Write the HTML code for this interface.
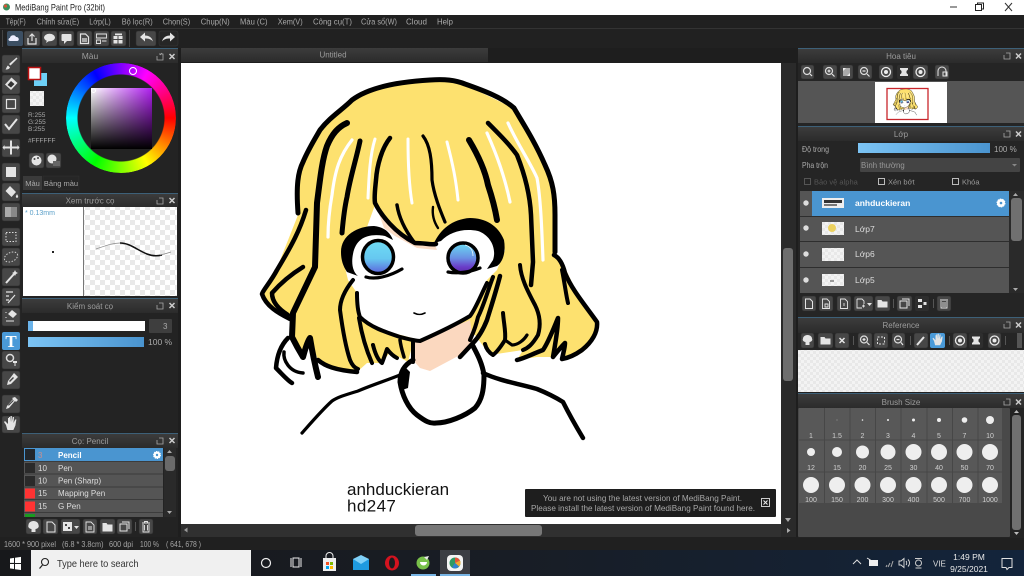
<!DOCTYPE html>
<html><head><meta charset="utf-8"><title>MediBang Paint Pro</title>
<style>
html,body{margin:0;padding:0;width:1024px;height:576px;overflow:hidden;background:#1f1f1f}
#root{position:relative;width:1024px;height:576px;overflow:hidden;filter:blur(.35px)}
svg{position:absolute;left:0;top:0}
text{font-family:"Liberation Sans","Noto Sans CJK SC",sans-serif;font-size:8.5px;fill:#b5b5b5}
.m text{font-size:8.6px;fill:#a8a8a8}
.st text{font-size:8.4px;fill:#a5a5a5}
.h{fill:#2f2f2f}.ln{fill:#3d6078}
.b{fill:#474747;stroke:#2c2c2c;stroke-width:.5}
.i{fill:#e4e4e4}.s{fill:none;stroke:#e4e4e4;stroke-width:1.2}
.t{text-anchor:middle;fill:#9c9c9c}
.k{fill:none;stroke:#000;stroke-linecap:round;stroke-linejoin:round}
.w{fill:none;stroke:#fff;stroke-linecap:round;stroke-linejoin:round}
.n{fill:#ddd;font-size:8px}
.c{text-anchor:middle;fill:#d0d0d0;font-size:7px}
.d{fill:#eee}
#wheel{position:absolute;left:66px;top:63px;width:110px;height:110px;border-radius:50%;background:conic-gradient(from 90deg,#f00,#ff0,#0f0,#0ff,#00f,#f0f,#f00);-webkit-mask:radial-gradient(circle,transparent 43px,#000 44px);mask:radial-gradient(circle,transparent 43px,#000 44px)}
#sq{position:absolute;left:91px;top:88px;width:61px;height:61px;background:linear-gradient(to bottom,rgba(0,0,0,0),#000),linear-gradient(to right,#fff,#b020f0)}
#mk{position:absolute;left:129px;top:67px;width:6px;height:6px;border:1.5px solid #fff;border-radius:50%}
#mk2{position:absolute;left:91px;top:88px;width:3px;height:3px;border:1px solid #fff;border-radius:50%}
</style></head><body><div id="root">
<svg width="1024" height="576" viewBox="0 0 1024 576" xmlns="http://www.w3.org/2000/svg">
<defs>
<pattern id="chk" width="10" height="10" patternUnits="userSpaceOnUse"><rect width="10" height="10" fill="#fff"/><rect width="5" height="5" fill="#e9e9e9"/><rect x="5" y="5" width="5" height="5" fill="#e9e9e9"/></pattern>
<pattern id="chk2" width="6" height="6" patternUnits="userSpaceOnUse"><rect width="6" height="6" fill="#f3f3f3"/><rect width="3" height="3" fill="#e8e8e8"/><rect x="3" y="3" width="3" height="3" fill="#e8e8e8"/></pattern>
<linearGradient id="bl" x1="0" x2="1" y1="0" y2="0"><stop offset="0" stop-color="#7cc4f4"/><stop offset="1" stop-color="#4a94cf"/></linearGradient>
<linearGradient id="tb" x1="0" x2="1" y1="0" y2="0"><stop offset="0" stop-color="#17181b"/><stop offset=".5" stop-color="#181d25"/><stop offset="1" stop-color="#13243b"/></linearGradient>
<linearGradient id="ey1" x1="0" x2="0" y1="0" y2="1"><stop offset="0" stop-color="#6fdcf5"/><stop offset=".55" stop-color="#66c8f0"/><stop offset="1" stop-color="#5c62dc"/></linearGradient>
<linearGradient id="ey2" x1="0" x2="0" y1="0" y2="1"><stop offset="0" stop-color="#6adcf2"/><stop offset=".5" stop-color="#6a90e4"/><stop offset=".8" stop-color="#6a3cc8"/><stop offset="1" stop-color="#5a2aa8"/></linearGradient>
<linearGradient id="hd" x1="0" x2="0" y1="0" y2="1"><stop offset="0" stop-color="#3c3c3c"/><stop offset="1" stop-color="#2b2b2b"/></linearGradient>
</defs>

<!-- base -->
<rect width="1024" height="576" fill="#212121"/>
<rect width="1024" height="15" fill="#fff"/>
<circle cx="6.5" cy="7" r="3.5" fill="#3a8f5c"/><circle cx="5.5" cy="6" r="1.6" fill="#d8553a"/>
<text x="15" y="10.5" textLength="90" lengthAdjust="spacingAndGlyphs" style="font-size:9.5px;fill:#222">MediBang Paint Pro (32bit)</text>
<rect x="950" y="6.5" width="7" height="1" fill="#333"/>
<rect x="975.5" y="4.5" width="6" height="6" fill="none" stroke="#222"/><path d="M977.5 5V3H983.5V9H981.5" fill="none" stroke="#222"/>
<path d="M1005 3l7 8m0-8l-7 8" stroke="#333" fill="none"/>

<!-- menu -->
<rect y="15" width="1024" height="13" fill="#202020"/>
<rect y="28" width="1024" height="1" fill="#333"/>
<g class="m">
<text x="5.7" y="24.5" textLength="20" lengthAdjust="spacingAndGlyphs">Tệp(F)</text>
<text x="36.7" y="24.5" textLength="42.5" lengthAdjust="spacingAndGlyphs">Chỉnh sửa(E)</text>
<text x="89.3" y="24.5" textLength="21.5" lengthAdjust="spacingAndGlyphs">Lớp(L)</text>
<text x="121.7" y="24.5" textLength="31" lengthAdjust="spacingAndGlyphs">Bộ lọc(R)</text>
<text x="162.7" y="24.5" textLength="27.5" lengthAdjust="spacingAndGlyphs">Chọn(S)</text>
<text x="200.7" y="24.5" textLength="29" lengthAdjust="spacingAndGlyphs">Chụp(N)</text>
<text x="240" y="24.5" textLength="27.5" lengthAdjust="spacingAndGlyphs">Màu (C)</text>
<text x="277.7" y="24.5" textLength="25" lengthAdjust="spacingAndGlyphs">Xem(V)</text>
<text x="313" y="24.5" textLength="39" lengthAdjust="spacingAndGlyphs">Công cụ(T)</text>
<text x="361" y="24.5" textLength="36" lengthAdjust="spacingAndGlyphs">Cửa sổ(W)</text>
<text x="406" y="24.5" textLength="21" lengthAdjust="spacingAndGlyphs">Cloud</text>
<text x="437" y="24.5" textLength="16" lengthAdjust="spacingAndGlyphs">Help</text>
</g>

<!-- toolbar -->
<rect y="29" width="1024" height="19" fill="#212121"/>
<rect x="2" y="30" width="1" height="17" fill="#444"/>
<rect x="129" y="30" width="1" height="17" fill="#444"/>
<rect x="7" y="31" width="16" height="15" rx="2" fill="#3c4f63"/>
<path d="M10 41c-2 0-2-3 0-3 0-3 5-4 6-1 3-.5 4 4 1 4z" fill="#eef"/>
<rect class="b" x="24" y="31" width="16" height="15" rx="2"/><path class="s" d="M32 41v-7m-2.5 2.5l2.5-2.5 2.5 2.5M28 38v6h8v-6"/>
<rect class="b" x="42" y="31" width="15" height="15" rx="2"/><ellipse class="i" cx="49.5" cy="37.5" rx="5.5" ry="3.8"/><path class="i" d="M47 40l-1 3 3-2z"/>
<rect class="b" x="59" y="31" width="15" height="15" rx="2"/><rect class="i" x="61.5" y="34" width="10" height="7" rx="1"/><path class="i" d="M64 41v3l3-3z"/>
<rect class="b" x="77" y="31" width="15" height="15" rx="2"/><path class="s" d="M80.5 34h5l3 3v6.5h-8zM82 39h5M82 41h5"/>
<rect class="b" x="94" y="31" width="15" height="15" rx="2"/><path class="s" d="M96.5 34h10v4h-10zM96.5 40h4v3.5h-4zM102 41h4.5" style="stroke-width:.9"/>
<rect class="b" x="111" y="31" width="15" height="15" rx="2"/><path class="i" d="M113.5 36h4v3h-4zM118.5 36h4v3h-4zM113.5 40h4v3.5h-4zM118.5 40h4v3.5h-4zM115 33.5h7v1.8h-7z"/>
<rect class="b" x="136" y="31" width="20" height="15" rx="2"/><path class="i" d="M140 37l5-4.500v3c4 0 7 2 8 6-2-2.500-4.500-3-8-3v3z"/>
<rect x="159" y="31" width="19" height="15" rx="2" fill="#262626" stroke="#3a3a3a" stroke-width=".5"/><path class="i" d="M175 37l-5-4.500v3c-4 0-7 2-8 6 2-2.500 4.500-3 8-3v3z"/>

<!-- left tool column -->
<rect x="0" y="48" width="22" height="490" fill="#232323"/>
<g>
<rect class="b" x="2" y="55" width="18" height="18" rx="2"/><path class="i" d="M16.5 57.5l1 1-7 7-1.5-1.5zM8 65.5l2 2c-1 2-3 2-4.5 2 1-1 1-3 2.5-4z"/>
<rect class="b" x="2" y="75" width="18" height="19" rx="2"/><path class="i" d="M11.5 77.5l6 5.5-6.5 7-6-5.5z"/><path d="M7.5 85l3.5-4 3.500 3-3.500 3.500z" fill="#333"/>
<rect class="b" x="2" y="95" width="18" height="18" rx="2"/><rect class="s" x="6.5" y="99.5" width="9" height="9"/>
<rect class="b" x="2" y="115" width="18" height="19" rx="2"/><path class="s" d="M5 124l4 5 8-10" style="stroke-width:2"/>
<rect class="b" x="2" y="139" width="18" height="18" rx="2"/><path class="i" d="M10 141h2v6h5.5v-1.5l2 2.5-2 2.5v-1.5H12v6h-2v-6H4.5v1.5l-2-2.5 2-2.5v1.500H10z" transform="translate(0,-.5)"/>
<rect class="b" x="2" y="163" width="18" height="18" rx="2"/><rect class="i" x="6" y="167" width="10" height="10"/>
<rect class="b" x="2" y="183" width="18" height="18" rx="2"/><path class="i" d="M10 186l6 6-4.500 5-6-6zM17 194c1 2 2 3 0 4-2-1-1-2 0-4z"/>
<rect class="b" x="2" y="203" width="18" height="18" rx="2"/><rect x="5" y="207" width="12" height="10" fill="#888"/><rect x="5" y="207" width="6" height="10" fill="#aaa"/>
<rect class="b" x="2" y="228" width="18" height="18" rx="2"/><rect x="6" y="232.5" width="10" height="9" fill="none" stroke="#ddd" stroke-dasharray="1.5 1.5"/>
<rect class="b" x="2" y="248" width="18" height="18" rx="2"/><ellipse cx="11" cy="257" rx="7" ry="4.5" fill="none" stroke="#ccc" stroke-dasharray="1.5 1.5" transform="rotate(-25 11 257)"/>
<rect class="b" x="2" y="268" width="18" height="18" rx="2"/><path class="s" d="M6 283l8-9" style="stroke-width:2"/><path class="i" d="M15 270l1 2 2 1-2 1-1 2-1-2-2-1 2-1z"/>
<rect class="b" x="2" y="288" width="18" height="18" rx="2"/><path class="s" d="M6 292h7M6 296h3M6 300h3M8 303l7-8" style="stroke-width:1.2"/>
<rect class="b" x="2" y="308" width="18" height="18" rx="2"/><path class="i" d="M12 310l5 4-4 4-5-4z"/><path class="s" d="M6 312v1M6 317v1M6 321h8" style="stroke-width:1"/>
<rect x="2" y="332" width="18" height="18" rx="2" fill="#4a9ad8"/><text x="11" y="347" style="font-size:17px;font-weight:bold;fill:#fff;text-anchor:middle;font-family:'Liberation Serif',serif">T</text>
<rect class="b" x="2" y="351" width="18" height="18" rx="2"/><circle cx="10" cy="358" r="3.5" fill="none" stroke="#ddd" stroke-width="1.5"/><path class="i" d="M13 361h4v2h-1.5v3h-1v-3H13z"/>
<rect class="b" x="2" y="371" width="18" height="18" rx="2"/><path class="i" d="M14 373l4 4-7 7-4 1 1-4z"/><path d="M9 381l4-4 1 1-4 4z" fill="#444"/>
<rect class="b" x="2" y="395" width="18" height="18" rx="2"/><path class="i" d="M15 397l3 3-2 2-1-1-6 7-3 1 1-3 6-7-1-1z"/><path d="M8 405l5-5 .8.8-5 5z" fill="#444"/>
<rect class="b" x="2" y="416" width="18" height="17" rx="2"/><path class="i" d="M6 425l-2-3 1-1 3 3v-6h1v-1h1v5l.6-6h1.2v6l1-5h1.2l-.5 6 1.7-3.500h1.2l-1 6-2 4.500h-6z"/>
</g>

<!-- canvas frame -->
<rect x="178" y="48" width="620" height="490" fill="#1e1e1e"/>
<rect x="181" y="48" width="307" height="14" fill="url(#hd)"/>
<text x="333" y="57.5" class="t" style="font-size:8px">Untitled</text>
<rect x="181" y="63" width="600" height="461" fill="#fff"/>

<!-- artwork -->
<g id="art">
<path fill="#FDE16F" d="M430,80C395,81 372,88 358,96C340,108 325,122 315,140C305,160 297,175 298,195L298,215L277,268L262,293L277,313L292,320L292,337L303,357L310,338L318,360L332,368L357,372L367,363L382,363L390,352L408,362L413,342L475,335L490,355L523,350L517,360L537,357L553,357L565,343L562,358L582,353L598,328L597,320L577,293L560,257L555,253L555,220L553,183L537,147L513,108L480,92L450,80Z"/>
<path fill="#fff" d="M375,205L383,217L415,243L435,245L460,222L490,225L505,250L497,270L487,280L470,317L420,340L375,328L360,317L357,293L348,280L342,255L352,232L367,227Z"/>
<path fill="#FBD8BF" d="M414,343L420,340L470,320L473,340L460,355L430,371L420,368L413,360Z"/>
<path fill="#FBD8BF" d="M378,211L383,217L415,243L435,245L437,250L417,248L395,236L384,228Z" opacity=".9"/>
<!-- highlights -->
<g class="w">
<path stroke-width="3.2" d="M352,140C340,155 335,170 332,195C329,212 328,225 328,237"/>
<path stroke-width="3" d="M375,139C370,155 369,175 368,198"/>
<path stroke-width="3" d="M408,139C408,165 409,185 412,203"/>
<path stroke-width="3" d="M447,142C453,165 456,180 458,200"/>
<path stroke-width="3.2" d="M487,133C497,155 505,178 510,202"/>
<path stroke-width="3.2" d="M508,123C518,145 530,162 537,178C541,200 542,235 543,260"/>
</g>
<!-- outline -->
<g class="k">
<path stroke-width="5" d="M298,213C296,185 298,172 303,162C308,150 313,142 320,130C330,117 342,110 352,100C368,88 395,82 430,80C445,79 455,80 465,84C485,91 503,98 514,108C524,125 535,142 545,165C553,182 555,195 555,215L555,252"/>
<path stroke-width="4.5" d="M306,210C300,230 292,245 277,270C270,283 263,290 262,294C266,306 278,313 290,319"/>
<path stroke-width="4.5" d="M303,267C290,275 279,285 272,293C272,303 280,310 288,315"/>
<path stroke-width="6" d="M347,123C338,127 332,134 327,146C322,160 320,180 317,203L315,267L293,313L292,337C296,345 300,352 303,357C305,350 307,342 310,338C312,350 315,365 318,377"/>
<path stroke-width="4.5" d="M318,360C325,366 335,370 357,372"/>
<path stroke-width="5" d="M360,141C356,160 350,178 347,197C344,210 343,222 342,233"/>
<path stroke-width="4.5" d="M390,138C382,148 377,165 376,180C375,190 374,197 375,203C381,215 395,233 415,243C425,243 430,245 436,244"/>
<path stroke-width="3.5" d="M397,205C399,218 405,230 414,242"/>
<path stroke-width="3.2" d="M423,136C430,145 432,160 432,180C434,195 440,210 445,222"/>
<path stroke-width="2.4" d="M433,207C432,215 434,222 438,228"/>
<path stroke-width="6" d="M469,140C478,155 485,170 488,185C492,197 495,208 497,220"/>
<path stroke-width="4.5" d="M488,123C500,135 510,145 517,155C525,175 530,195 531,215L533,262L531,285"/>
<path stroke-width="4" d="M520,265C521,278 527,290 535,305C540,315 541,325 538,335C532,345 528,348 523,350"/>
<path stroke-width="4.5" d="M554,255C560,258 563,265 565,273C572,290 585,305 597,322C598,332 592,342 582,350C575,355 568,358 562,359C564,350 565,347 565,343C560,348 557,352 553,357C555,345 558,330 558,318C553,330 548,343 543,350C530,355 525,358 517,360"/>
<path stroke-width="4" d="M562,270C565,285 566,295 568,303"/>
<path stroke-width="4.5" d="M500,276C495,295 490,310 487,320C483,330 478,338 473,343L460,357"/>
<path stroke-width="4" d="M493,277C488,290 484,305 478,317C475,330 472,335 470,340"/>
<path stroke-width="4" d="M503,313C504,325 506,332 505,340C500,348 497,352 493,355C488,352 486,348 485,344"/>
<path stroke-width="3.2" d="M505,340L512,345C518,345 524,340 527,335"/>
<path stroke-width="4" d="M353,280C345,290 340,300 340,310C342,325 345,345 350,360C352,365 355,368 358,369"/>
<path stroke-width="4" d="M359,318C361,330 364,345 372,363"/>
<path stroke-width="4" d="M373,345C375,353 378,360 382,363C384,358 386,352 387,349C390,353 393,356 397,358"/>
<path stroke-width="3.5" d="M400,340C401,348 403,353 404,357"/>
<path stroke-width="4" d="M357,293C357,305 358,312 360,317C370,327 385,332 400,337C408,339 415,341 420,341C438,333 455,325 470,316C475,310 480,297 487,283"/>
<path stroke-width="4" d="M413,342L413,362"/>
<!-- small strand -->
<path stroke-width="4.5" d="M288,338C281,345 277,355 276,368C283,375 287,380 292,383"/>
<path stroke-width="3.5" d="M284,352C283,360 289,372 303,373"/>
<!-- collar -->
<path stroke-width="5" d="M413,360C404,365 400,372 400,382C402,395 408,408 417,415C425,421 430,424 436,423C448,423 465,416 475,408C482,400 484,390 484,375C482,362 476,352 473,346"/>
<path stroke-width="3.2" d="M400,375C385,381 372,385 358,391C345,395 338,397 332,401C322,410 310,424 302,433"/>
<path stroke-width="4.5" d="M483,373C500,381 520,384 537,389C547,393 555,397 563,402C570,416 577,428 583,438"/>
<path fill="#000" stroke="none" d="M404,366L398,380L402,390L408,388L410,372Z"/>
<!-- mouth -->
<path stroke-width="1.6" d="M414,313C418,315 421,315 425,313"/>
</g>
<!-- eyes -->
<path d="M341,252C341,235 358,226 374,226C384,227 390,232 393,240L385,236C368,233 356,238 353,254C351,264 353,272 358,276L347,272C343,266 341,260 341,252Z" fill="#000"/>
<ellipse cx="378" cy="257" rx="15.5" ry="16.5" fill="url(#ey1)" stroke="#000" stroke-width="3.5"/>
<path d="M366,277C376,280 390,276 402,269" class="k" stroke-width="3.2"/>
<path d="M434,243C440,230 452,219 470,218C485,218 498,225 504,240C506,252 503,262 497,266L487,269L493,260C497,248 490,235 478,231C463,228 450,232 441,241Z" fill="#000"/>
<ellipse cx="463" cy="258" rx="15" ry="15" fill="url(#ey2)" stroke="#000" stroke-width="3.5"/>
<path d="M465,245C470,246 473,250 473,256" fill="none" stroke="#eaf6ff" stroke-width=".8"/>
<path d="M448,272C458,274 470,272 480,268" class="k" stroke-width="3.2"/>
</g>

<text x="347" y="495" style="font-size:17px;fill:#111">anhduckieran</text>
<text x="347" y="511.5" style="font-size:17px;fill:#111;letter-spacing:.4px">hd247</text>

<!-- notification -->
<rect x="525" y="489" width="251" height="28" rx="1" fill="#1e1e1e"/>
<text x="543" y="501" textLength="199" lengthAdjust="spacingAndGlyphs" style="font-size:8.2px;fill:#a8a8a8">You are not using the latest version of MediBang Paint.</text>
<text x="531" y="511" textLength="224" lengthAdjust="spacingAndGlyphs" style="font-size:8.2px;fill:#a8a8a8">Please install the latest version of MediBang Paint found here.</text>
<rect x="761.5" y="498.5" width="8" height="8" fill="none" stroke="#ccc"/><path d="M763.5 500.5l4 4m0-4l-4 4" stroke="#eee"/>

<!-- canvas scrollbars -->
<rect x="781" y="63" width="15" height="474" fill="#2a2a2a"/>
<rect x="783" y="248" width="10" height="133" rx="3" fill="#6e6e6e"/>
<path d="M785 518h6l-3 4z" fill="#aaa"/>
<rect x="181" y="524" width="600" height="13" fill="#303030"/>
<rect x="415" y="525" width="127" height="11" rx="3" fill="#777"/>
<path d="M184 530l3.5-2.5v5z" fill="#999"/>
<path d="M787 528l3.5 2.5-3.5 2.5z" fill="#aaa"/>

<!-- colour panel -->
<rect x="22" y="48" width="156" height="144" fill="#232323"/>
<rect x="22" y="48" width="156" height="15" fill="url(#hd)"/>
<rect x="22" y="48" width="156" height="1" class="ln"/>
<text x="90" y="59" class="t" style="font-size:8.5px">Màu</text>
<path d="M159 54h4v6h-6v-4M162 53l-2 2" fill="none" stroke="#aaa" stroke-width=".8"/>
<path d="M169.5 54l5 5m0-5l-5 5" stroke="#ccc" stroke-width="1.5"/>
<rect x="34" y="73" width="13" height="13" fill="#6dd0f7"/>
<rect x="28.5" y="67.5" width="12" height="12" fill="#fff" stroke="#b11" stroke-width="1.5"/>
<rect x="30" y="91" width="14" height="15" fill="url(#chk2)"/>
<text x="28" y="117" style="font-size:6.5px;fill:#aaa">R:255</text>
<text x="28" y="124" style="font-size:6.5px;fill:#aaa">G:255</text>
<text x="28" y="131" style="font-size:6.5px;fill:#aaa">B:255</text>
<text x="28" y="142.5" style="font-size:6.5px;fill:#aaa">#FFFFFF</text>
<rect class="b" x="29" y="153" width="15" height="15" rx="2"/><circle class="i" cx="36.5" cy="160.5" r="5"/><circle cx="34.5" cy="159" r="1" fill="#444"/><circle cx="38" cy="158" r="1" fill="#444"/>
<rect class="b" x="46" y="153" width="15" height="15" rx="2"/><circle class="i" cx="52" cy="159" r="4.5"/><rect x="53" y="161" width="7" height="5" fill="#666"/>
<rect x="23" y="176" width="19" height="14" fill="#3a3a3a"/><text x="32.5" y="186" class="t" style="font-size:7.5px;fill:#aaa">Màu</text>
<rect x="43" y="176" width="36" height="14" fill="#262626" stroke="#333" stroke-width=".5"/><text x="61" y="186" class="t" style="font-size:7.5px;fill:#aaa">Bảng màu</text>

<!-- brush preview -->
<rect x="22" y="193" width="156" height="105" fill="#232323"/>
<rect x="22" y="193" width="156" height="1" class="ln"/>
<rect x="22" y="194" width="156" height="13" fill="url(#hd)"/>
<text x="90" y="203.5" class="t" style="font-size:8px">Xem trước cọ</text>
<path d="M159 198h4v6h-6v-4" fill="none" stroke="#aaa" stroke-width=".8"/><path d="M169.5 198l5 5m0-5l-5 5" stroke="#ccc" stroke-width="1.5"/>
<rect x="23" y="207" width="60" height="89" fill="#fff"/>
<rect x="84" y="207" width="93" height="89" fill="url(#chk)"/>
<rect x="83" y="207" width="1" height="89" fill="#777"/>
<text x="25" y="215" style="font-size:7px;fill:#5a9fc8">* 0.13mm</text>
<rect x="52" y="251" width="2" height="2" fill="#222"/>
<path d="M96 249C105 246 112 243 120 243C130 243 137 250 147 254C152 256 158 256 162 255" fill="none" stroke="#888" stroke-width=".7"/>
<path d="M120 243C130 243 137 250 147 254C152 256 158 256 162 255" fill="none" stroke="#111" stroke-width="1.5"/>
<path d="M160 255C165 254 168 253 171 252" fill="none" stroke="#888" stroke-width=".7"/>

<!-- brush control -->
<rect x="22" y="298" width="156" height="134" fill="#232323"/>
<rect x="22" y="298" width="156" height="1" class="ln"/>
<rect x="22" y="299" width="156" height="14" fill="url(#hd)"/>
<text x="90" y="309" class="t" style="font-size:8px">Kiểm soát cọ</text>
<path d="M159 303h4v6h-6v-4" fill="none" stroke="#aaa" stroke-width=".8"/><path d="M169.5 303l5 5m0-5l-5 5" stroke="#ccc" stroke-width="1.5"/>
<rect x="28" y="321" width="117" height="10" fill="#fff"/><rect x="28" y="321" width="5" height="10" fill="#6ab3ea"/>
<rect x="149" y="319" width="23" height="14" rx="1" fill="#3e3e3e"/><text x="163" y="329" style="font-size:8px;fill:#aaa">3</text>
<rect x="28" y="337" width="116" height="10" fill="url(#bl)"/>
<text x="148" y="345" style="font-size:8.5px;fill:#aaa">100 %</text>

<!-- brush panel -->
<rect x="22" y="433" width="156" height="105" fill="#232323"/>
<rect x="22" y="433" width="156" height="1" class="ln"/>
<rect x="22" y="434" width="156" height="14" fill="url(#hd)"/>
<text x="90" y="444" class="t" style="font-size:8px">Cọ: Pencil</text>
<path d="M159 438h4v6h-6v-4" fill="none" stroke="#aaa" stroke-width=".8"/><path d="M169.5 438l5 5m0-5l-5 5" stroke="#ccc" stroke-width="1.5"/>
<rect x="24" y="448" width="139" height="69" fill="#555"/>
<rect x="24" y="448" width="139" height="13" fill="#4a95d0"/>
<rect x="25" y="449" width="10" height="11" fill="#22272c"/>
<text x="38" y="458" style="font-size:8px;fill:#c89090">3</text>
<text x="58" y="458" style="font-size:8px;fill:#fff;font-weight:bold">Pencil</text>
<circle cx="157" cy="455" r="3.5" fill="#fff" stroke="#fff" stroke-dasharray="1.2 1"/><circle cx="157" cy="455" r="1.2" fill="#4a95d0"/>
<rect x="24" y="461" width="139" height="1" fill="#3c3c3c"/>
<rect x="25" y="463" width="10" height="10" fill="#2a2a2a"/><text x="38" y="471" class="n">10</text><text x="58" y="471" class="n">Pen</text>
<rect x="24" y="473.5" width="139" height="1" fill="#3c3c3c"/>
<rect x="25" y="476" width="10" height="10" fill="#2a2a2a"/><text x="38" y="483.5" class="n">10</text><text x="58" y="483.5" class="n">Pen (Sharp)</text>
<rect x="24" y="486.5" width="139" height="1" fill="#3c3c3c"/>
<rect x="25" y="488.5" width="10" height="10" fill="#f33"/><text x="38" y="496" class="n">15</text><text x="58" y="496" class="n">Mapping Pen</text>
<rect x="24" y="499" width="139" height="1" fill="#3c3c3c"/>
<rect x="25" y="501.5" width="10" height="10" fill="#f33"/><text x="38" y="509" class="n">15</text><text x="58" y="509" class="n">G Pen</text>
<rect x="24" y="512" width="139" height="1" fill="#3c3c3c"/>
<rect x="25" y="514" width="10" height="3" fill="#1a9a20"/>
<rect x="164" y="448" width="12" height="69" fill="#2a2a2a"/>
<rect x="165" y="456" width="10" height="15" rx="3" fill="#6a6a6a"/>
<path d="M167 453l2.5-3 2.5 3zM167 511l2.5 3 2.5-3z" fill="#aaa"/>
<g>
<rect class="b" x="26" y="519" width="15" height="15" rx="2"/><path class="i" d="M33.5 521c3 0 5 2 5 4 1 2-1 4-3 4v3h-4v-3c-2 0-4-2-3-4 0-2 2-4 5-4z"/>
<rect class="b" x="43" y="519" width="15" height="15" rx="2"/><path class="s" d="M47 522h5l3 3v7h-8z" style="stroke-width:1"/>
<rect class="b" x="61" y="519" width="19" height="15" rx="2"/><rect class="i" x="63" y="522" width="9" height="9"/><rect x="65" y="524" width="2" height="2" fill="#444"/><rect x="68" y="527" width="2" height="2" fill="#444"/><path class="i" d="M74 526h5l-2.5 3z"/>
<rect class="b" x="83" y="519" width="14" height="15" rx="2"/><path class="s" d="M86 522h5l3 3v7h-8zM88 527h4M88 529h4" style="stroke-width:.9"/>
<rect class="b" x="100" y="519" width="15" height="15" rx="2"/><path class="i" d="M102.5 523h4l1 1.5h5v7h-10z"/>
<rect class="b" x="117" y="519" width="15" height="15" rx="2"/><rect class="s" x="120" y="524" width="7" height="7" style="stroke-width:1"/><path class="s" d="M122 522h7v7" style="stroke-width:1"/>
<rect x="135" y="522" width="1" height="9" fill="#555"/>
<rect class="b" x="139" y="519" width="14" height="15" rx="2"/><path class="s" d="M142 523h8M143 524v8h6v-8M144.5 525v5.5M147.500 525v5.5M144.5 523v-1.5h3v1.5" style="stroke-width:.9"/>
</g>

<!-- status -->
<rect y="537" width="1024" height="13" fill="#202020"/>
<g class="st">
<text x="4" y="547" textLength="52" lengthAdjust="spacingAndGlyphs">1600 * 900 pixel</text>
<text x="62" y="547" textLength="41.5" lengthAdjust="spacingAndGlyphs">(6.8 * 3.8cm)</text>
<text x="109" y="547" textLength="24" lengthAdjust="spacingAndGlyphs">600 dpi</text>
<text x="140" y="547" textLength="19" lengthAdjust="spacingAndGlyphs">100 %</text>
<text x="166" y="547" textLength="35" lengthAdjust="spacingAndGlyphs">( 641, 678 )</text>
</g>

<!-- navigator -->
<rect x="798" y="48" width="226" height="78" fill="#252525"/>
<rect x="798" y="48" width="226" height="1" class="ln"/>
<rect x="798" y="49" width="226" height="14" fill="url(#hd)"/>
<text x="901" y="59" class="t" style="font-size:8px">Hoa tiêu</text>
<path d="M1006 53h4v6h-6v-4" fill="none" stroke="#aaa" stroke-width=".8"/><path d="M1016 53.5l5 5m0-5l-5 5" stroke="#ccc" stroke-width="1.5"/>
<g>
<rect class="b" x="801" y="65" width="13" height="14" rx="2"/><circle cx="807" cy="71" r="3.5" fill="none" stroke="#ddd" stroke-width="1.2"/><path class="s" d="M810 74l2 2"/>
<rect class="b" x="823" y="65" width="14" height="14" rx="2"/><circle cx="829" cy="71" r="3.5" fill="none" stroke="#ddd" stroke-width="1.2"/><path class="s" d="M832 74l2.5 2.5M827.5 71h3M829 69.5v3"/>
<rect class="b" x="840" y="65" width="13" height="14" rx="2"/><rect x="843" y="68" width="7" height="8" fill="#aaa"/><path d="M843 68h3l-3 3zM850 76h-3l3-3z" fill="#eee"/>
<rect class="b" x="858" y="65" width="14" height="14" rx="2"/><circle cx="864" cy="71" r="3.5" fill="none" stroke="#ddd" stroke-width="1.2"/><path class="s" d="M867 74l2.5 2.5M862.5 71h3"/>
<rect class="b" x="879" y="65" width="14" height="14" rx="2"/><circle cx="886" cy="72" r="4.5" fill="none" stroke="#eee" stroke-width="1.3"/><circle cx="886" cy="72" r="2" fill="#eee"/>
<rect x="897" y="65" width="13" height="14" rx="2" fill="#2e2e2e"/><path class="i" d="M900 68h8v1.5l-1.5 1.5v2l1.5 1.5v1.5h-8v-1.5l1.5-1.5v-2l-1.5-1.5z"/>
<rect class="b" x="913" y="65" width="15" height="14" rx="2"/><circle cx="920.5" cy="72" r="4.5" fill="none" stroke="#eee" stroke-width="1.3"/><circle cx="920.5" cy="72" r="2" fill="#eee"/>
<rect class="b" x="935" y="65" width="14" height="14" rx="2"/><path class="s" d="M938 76v-5a4 4 0 0 1 8 0v5M943 72h4v4h-4z" style="stroke-width:1"/>
</g>
<rect x="798" y="81" width="226" height="42" fill="#555"/>
<rect x="875" y="82" width="72" height="41" fill="#fff"/>
<use href="#art" transform="translate(874,83) scale(.073)"/>
<rect x="887" y="88.5" width="41" height="31" fill="none" stroke="#c8252b" stroke-width="1.3"/>

<!-- layers -->
<rect x="798" y="126" width="226" height="190" fill="#252525"/>
<rect x="798" y="126" width="226" height="1" class="ln"/>
<rect x="798" y="127" width="226" height="14" fill="url(#hd)"/>
<text x="901" y="137" class="t" style="font-size:8px">Lớp</text>
<path d="M1006 131h4v6h-6v-4" fill="none" stroke="#aaa" stroke-width=".8"/><path d="M1016 131.5l5 5m0-5l-5 5" stroke="#ccc" stroke-width="1.5"/>
<text x="802" y="152" textLength="27" lengthAdjust="spacingAndGlyphs" style="font-size:8px;fill:#aaa">Độ trong</text>
<rect x="858" y="143" width="132" height="10" fill="url(#bl)"/>
<text x="994" y="152" style="font-size:8px;fill:#aaa">100 %</text>
<text x="802" y="168" textLength="26" lengthAdjust="spacingAndGlyphs" style="font-size:8px;fill:#aaa">Pha trộn</text>
<rect x="860" y="158" width="160" height="14" rx="1" fill="#444"/>
<text x="861" y="168" style="font-size:7.8px;fill:#999">Bình thường</text>
<path d="M1012 164h5l-2.5 2.5z" fill="#888"/>
<rect x="804.5" y="178.5" width="6" height="6" fill="none" stroke="#555"/>
<text x="814" y="184.5" style="font-size:7.5px;fill:#555">Bảo vệ alpha</text>
<rect x="878.5" y="178.5" width="6" height="6" fill="none" stroke="#bbb"/>
<text x="888" y="184.5" style="font-size:7.5px;fill:#999">Xén bớt</text>
<rect x="952.5" y="178.5" width="6" height="6" fill="none" stroke="#bbb"/>
<text x="962" y="184.5" style="font-size:7.5px;fill:#999">Khóa</text>

<rect x="800" y="191" width="209" height="102" fill="#555"/>
<rect x="812" y="191" width="197" height="25" fill="#4a95d0"/>
<rect x="800" y="241" width="209" height="1" fill="#2e2e2e"/><rect x="800" y="267" width="209" height="1" fill="#2e2e2e"/><rect x="800" y="216" width="209" height="1" fill="#2e2e2e"/>
<circle cx="806" cy="203" r="2.7" fill="#ddd"/><circle cx="806" cy="228" r="2.7" fill="#ddd"/><circle cx="806" cy="254" r="2.7" fill="#ddd"/><circle cx="806" cy="280" r="2.7" fill="#ddd"/>
<rect x="822" y="198" width="22" height="10" fill="#eee"/><rect x="824" y="200" width="18" height="3" fill="#333"/><rect x="824" y="204" width="13" height="2" fill="#777"/>
<rect x="822" y="222" width="22" height="13" fill="url(#chk2)"/><circle cx="832" cy="228" r="4" fill="#ecd15f"/>
<rect x="822" y="248" width="22" height="13" fill="url(#chk2)"/><rect x="822" y="274" width="22" height="12" fill="url(#chk2)"/><rect x="830" y="280" width="4" height="2" fill="#999"/>
<text x="855" y="206" style="font-size:8.5px;fill:#fff;font-weight:bold">anhduckieran</text>
<text x="855" y="232" style="font-size:8.5px;fill:#ddd">Lớp7</text>
<text x="855" y="257" style="font-size:8.5px;fill:#ddd">Lớp6</text>
<text x="855" y="283" style="font-size:8.5px;fill:#ddd">Lớp5</text>
<circle cx="1001" cy="203" r="4" fill="#fff" stroke="#fff" stroke-dasharray="1.5 1"/><circle cx="1001" cy="203" r="1.3" fill="#4a95d0"/>
<rect x="1009" y="191" width="15" height="102" fill="#2a2a2a"/>
<rect x="1011" y="198" width="11" height="43" rx="3" fill="#707070"/>
<path d="M1013 196l2.5-3 2.5 3zM1013 288l2.5 3 2.5-3z" fill="#aaa"/>
<g>
<rect class="b" x="802" y="296" width="14" height="15" rx="2"/><path class="s" d="M805.5 299h4.5l2.5 2.5v7h-7z" style="stroke-width:1"/>
<rect class="b" x="819" y="296" width="14" height="15" rx="2"/><path class="s" d="M822.5 299h4.5l2.5 2.5v7h-7zM825 304h3v3h-3z" style="stroke-width:.9"/>
<rect class="b" x="837" y="296" width="14" height="15" rx="2"/><path class="s" d="M840.5 299h4.5l2.5 2.5v7h-7zM844 303v3" style="stroke-width:.9"/>
<rect class="b" x="854" y="296" width="19" height="15" rx="2"/><path class="s" d="M857 299h5l2 2v3M857 299v9h5M862 306h3M863.5 304.5v3" style="stroke-width:.9"/><path class="i" d="M867 303h5l-2.5 3z"/>
<rect class="b" x="875" y="296" width="15" height="15" rx="2"/><path class="i" d="M877.5 300h4l1 1.5h5v6h-10z"/>
<rect x="893" y="299" width="1" height="9" fill="#555"/>
<rect class="b" x="897" y="296" width="15" height="15" rx="2"/><rect class="s" x="900" y="301" width="7" height="7" style="stroke-width:1"/><path class="s" d="M902 299h7v7" style="stroke-width:1"/>
<rect x="915" y="296" width="14" height="15" rx="2" fill="#2e2e2e"/><path class="i" d="M918 299h4v3h-4zM918 305h4v3h-4zM923.5 302h3v3h-3z"/>
<rect x="933" y="299" width="1" height="9" fill="#555"/>
<rect class="b" x="937" y="296" width="14" height="15" rx="2"/><path class="s" d="M940 300h8M941 301v7h6v-7M943 302v5M945 302v5" style="stroke-width:.9"/>
</g>

<!-- reference -->
<rect x="798" y="316" width="226" height="76" fill="#252525"/>
<rect x="798" y="317" width="226" height="1" class="ln"/>
<rect x="798" y="318" width="226" height="15" fill="url(#hd)"/>
<text x="901" y="328" class="t" style="font-size:8px">Reference</text>
<path d="M1006 322h4v6h-6v-4" fill="none" stroke="#aaa" stroke-width=".8"/><path d="M1016 322.5l5 5m0-5l-5 5" stroke="#ccc" stroke-width="1.5"/>
<g>
<rect class="b" x="801" y="333" width="13" height="15" rx="2"/><path class="i" d="M807.5 335c3 0 4.5 2 4.5 3.5 1 2-1 3.5-2.5 3.5v3h-4v-3c-1.5 0-3.5-1.5-2.5-3.5 0-1.5 1.5-3.5 4.5-3.5z"/>
<rect class="b" x="818" y="333" width="15" height="15" rx="2"/><path class="i" d="M820.5 337h4l1 1.5h5v6h-10z"/>
<rect class="b" x="835" y="333" width="14" height="15" rx="2"/><path class="s" d="M839.5 338l5 5m0-5l-5 5" style="stroke-width:1.5"/>
<rect x="853" y="336" width="1" height="9" fill="#555"/>
<rect class="b" x="858" y="333" width="14" height="15" rx="2"/><circle cx="864" cy="339.5" r="3.5" fill="none" stroke="#ddd" stroke-width="1.2"/><path class="s" d="M867 342.5l2.5 2.5M862.5 339.5h3M864 338v3"/>
<rect class="b" x="874" y="333" width="14" height="15" rx="2"/><rect x="877.5" y="337" width="7" height="7" fill="none" stroke="#ddd" stroke-dasharray="2 1.5"/>
<rect class="b" x="892" y="333" width="13" height="15" rx="2"/><circle cx="898" cy="339.5" r="3.5" fill="none" stroke="#ddd" stroke-width="1.2"/><path class="s" d="M901 342.5l2 2.5M896.5 339.5h3"/>
<rect x="910" y="336" width="1" height="9" fill="#555"/>
<rect class="b" x="914" y="333" width="14" height="15" rx="2"/><path class="s" d="M917 345l7-8" style="stroke-width:2"/>
<rect x="930" y="333" width="15" height="15" rx="2" fill="#4a9ad8"/><path class="i" d="M934 341l-1.5-2.500.8-.7 2.2 2.400v-5h.9v-1h.9v4.500l.5-5h1v5l.8-4.200h1l-.4 5 1.500-3h1l-.8 5-1.800 3.800h-5z"/>
<rect x="949" y="336" width="1" height="9" fill="#555"/>
<rect class="b" x="953" y="333" width="14" height="15" rx="2"/><circle cx="960" cy="340.5" r="4.5" fill="none" stroke="#eee" stroke-width="1.3"/><circle cx="960" cy="340.5" r="2" fill="#eee"/>
<rect class="b" x="969" y="333" width="14" height="15" rx="2" style="fill:#2e2e2e"/><path class="i" d="M972 336.5h8v1.5l-1.5 1.5v2l1.5 1.5v1.5h-8v-1.5l1.5-1.5v-2l-1.5-1.5z"/>
<rect class="b" x="988" y="333" width="13" height="15" rx="2"/><circle cx="994.5" cy="340.5" r="4.5" fill="none" stroke="#eee" stroke-width="1.3"/><circle cx="994.5" cy="340.5" r="2" fill="#eee"/>
<rect x="1005" y="336" width="1" height="9" fill="#555"/>
<rect x="1017" y="333" width="5" height="15" fill="#555"/>
</g>
<rect x="798" y="350" width="226" height="42" fill="url(#chk2)"/>

<!-- brush size -->
<rect x="798" y="393" width="226" height="1" class="ln"/>
<rect x="798" y="394" width="226" height="144" fill="#232323"/>
<rect x="798" y="394" width="226" height="14" fill="url(#hd)"/>
<text x="901" y="405" class="t" style="font-size:8px">Brush Size</text>
<path d="M1006 399h4v6h-6v-4" fill="none" stroke="#aaa" stroke-width=".8"/><path d="M1016 399.5l5 5m0-5l-5 5" stroke="#ccc" stroke-width="1.5"/>
<rect x="798" y="408" width="212" height="129" rx="1" fill="#494949"/>
<rect x="799" y="408" width="203" height="95" fill="#585858"/>
<path d="M824.5 408v95M850 408v95M875.5 408v95M901 408v95M927 408v95M952.5 408v95M978 408v95M799 440h203M799 472h203" stroke="#474747" fill="none"/>
<g class="d">
<circle cx="837" cy="420" r=".4"/><circle cx="862.5" cy="420" r=".8"/><circle cx="888" cy="420" r="1"/><circle cx="913.5" cy="420" r="1.5"/><circle cx="939" cy="420" r="2"/><circle cx="964.5" cy="420" r="2.8"/><circle cx="990" cy="420" r="4"/>
<circle cx="811" cy="452" r="4"/><circle cx="837" cy="452" r="5"/><circle cx="862.5" cy="452" r="6.5"/><circle cx="888" cy="452" r="7.5"/><circle cx="913.5" cy="452" r="8"/><circle cx="939" cy="452" r="8"/><circle cx="964.5" cy="452" r="8"/><circle cx="990" cy="452" r="8"/>
<circle cx="811" cy="485" r="8"/><circle cx="837" cy="485" r="8"/><circle cx="862.5" cy="485" r="8"/><circle cx="888" cy="485" r="8"/><circle cx="913.5" cy="485" r="8"/><circle cx="939" cy="485" r="8"/><circle cx="964.5" cy="485" r="8"/><circle cx="990" cy="485" r="8"/>
</g>
<text x="811" y="438" class="c">1</text><text x="837" y="438" class="c">1.5</text><text x="862.5" y="438" class="c">2</text><text x="888" y="438" class="c">3</text><text x="913.5" y="438" class="c">4</text><text x="939" y="438" class="c">5</text><text x="964.5" y="438" class="c">7</text><text x="990" y="438" class="c">10</text>
<text x="811" y="470" class="c">12</text><text x="837" y="470" class="c">15</text><text x="862.5" y="470" class="c">20</text><text x="888" y="470" class="c">25</text><text x="913.5" y="470" class="c">30</text><text x="939" y="470" class="c">40</text><text x="964.5" y="470" class="c">50</text><text x="990" y="470" class="c">70</text>
<text x="811" y="502" class="c">100</text><text x="837" y="502" class="c">150</text><text x="862.5" y="502" class="c">200</text><text x="888" y="502" class="c">300</text><text x="913.5" y="502" class="c">400</text><text x="939" y="502" class="c">500</text><text x="964.5" y="502" class="c">700</text><text x="990" y="502" class="c">1000</text>
<rect x="1012" y="415" width="9" height="115" rx="3" fill="#707070"/>
<path d="M1014 413l2.5-3 2.5 3zM1014 532l2.5 3 2.5-3z" fill="#bbb"/>

<!-- taskbar -->
<rect y="550" width="1024" height="26" fill="url(#tb)"/>
<path d="M10 558.5l4-.6v5h-4zM15 557.8l6-.9v6.100h-6zM10 564h4v5l-4-.6zM15 564h6v6l-6-.8z" fill="#fff"/>
<rect x="31" y="550" width="220" height="26" fill="#f0f0f0"/>
<circle cx="45" cy="562" r="3.5" fill="none" stroke="#222" stroke-width="1.1"/><path d="M42.5 565l-3 3.5" stroke="#222" stroke-width="1.2"/>
<text x="57" y="567" textLength="81.5" lengthAdjust="spacingAndGlyphs" style="font-size:10.2px;fill:#333">Type here to search</text>
<circle cx="266" cy="563" r="4.5" fill="none" stroke="#eee" stroke-width="1.2"/>
<path d="M293 558h6v9h-6zM291 558v9M301 558v9" stroke="#eee" fill="none" stroke-width="1"/>
<path d="M323 558h13v13h-13z" fill="#eee"/><path d="M326 558v-2a3.5 3.5 0 0 1 7 0v2" fill="none" stroke="#eee"/>
<rect x="326" y="562" width="3" height="3" fill="#f25022"/><rect x="330" y="562" width="3" height="3" fill="#7fba00"/><rect x="326" y="566" width="3" height="3" fill="#00a4ef"/><rect x="330" y="566" width="3" height="3" fill="#ffb900"/>
<rect x="353" y="559" width="16" height="11" fill="#1e9ae0"/><path d="M353 559l8-4 8 4-8 5z" fill="#7fd0f8"/>
<ellipse cx="392" cy="563" rx="7" ry="7.5" fill="#d3131f"/><ellipse cx="392" cy="563" rx="3" ry="5.5" fill="#1b1c20"/>
<rect x="411" y="574" width="25" height="2" fill="#78b5e5"/>
<circle cx="423" cy="563" r="6.5" fill="#78c04a"/><path d="M420 562a3.5 3.5 0 1 0 7 0z" fill="#fff"/><path d="M424 557l5-1-2 4z" fill="#e8e8e8"/>
<rect x="440" y="550" width="30" height="26" fill="#3c3e44"/>
<rect x="440" y="574" width="30" height="2" fill="#78b5e5"/>
<rect x="447" y="555" width="16" height="16" rx="4" fill="#f4f4f4"/>
<circle cx="455" cy="563" r="5.5" fill="#2f9a62"/><path d="M455 563l0-5.5a5.5 5.5 0 0 1 5 3z" fill="#e4543a"/><path d="M455 563l5-2.5a5.5 5.5 0 0 1-1 6z" fill="#f0a830"/><path d="M455 563l4 3.5a5.5 5.5 0 0 1-7 1z" fill="#2e7fd0"/>
<path d="M853 564l4-4 4 4" fill="none" stroke="#ddd" stroke-width="1"/>
<rect x="869" y="560" width="9" height="6" fill="#eee"/><path d="M867 558l5 3" stroke="#eee" fill="none"/>
<path d="M886 567l1-2M888 567l2-4M891 567l2-6" stroke="#aaa" fill="none"/>
<path d="M899 561h2l3-2.5v9l-3-2.5h-2zM906 561c1 1 1 3 0 4M908 559.5c2 2 2 5 0 7" stroke="#ddd" fill="none" stroke-width=".9"/>
<circle cx="918.5" cy="563" r="3" fill="none" stroke="#ccc"/><path d="M915 558.5h7M915.5 568h6" stroke="#ccc"/>
<text x="933" y="566.5" style="font-size:8px;fill:#ddd">VIE</text>
<text x="969" y="560" style="font-size:8.5px;fill:#e8e8e8;text-anchor:middle">1:49 PM</text>
<text x="969" y="572" style="font-size:8.5px;fill:#e8e8e8;text-anchor:middle">9/25/2021</text>
<path d="M1002 558.5h10v9h-3l-2 2-1-2h-4z" fill="none" stroke="#e0e0e0"/>
</svg>
<div id="wheel"></div>
<div id="sq"></div>
<div id="mk"></div>
<div id="mk2"></div>
</div></body></html>
